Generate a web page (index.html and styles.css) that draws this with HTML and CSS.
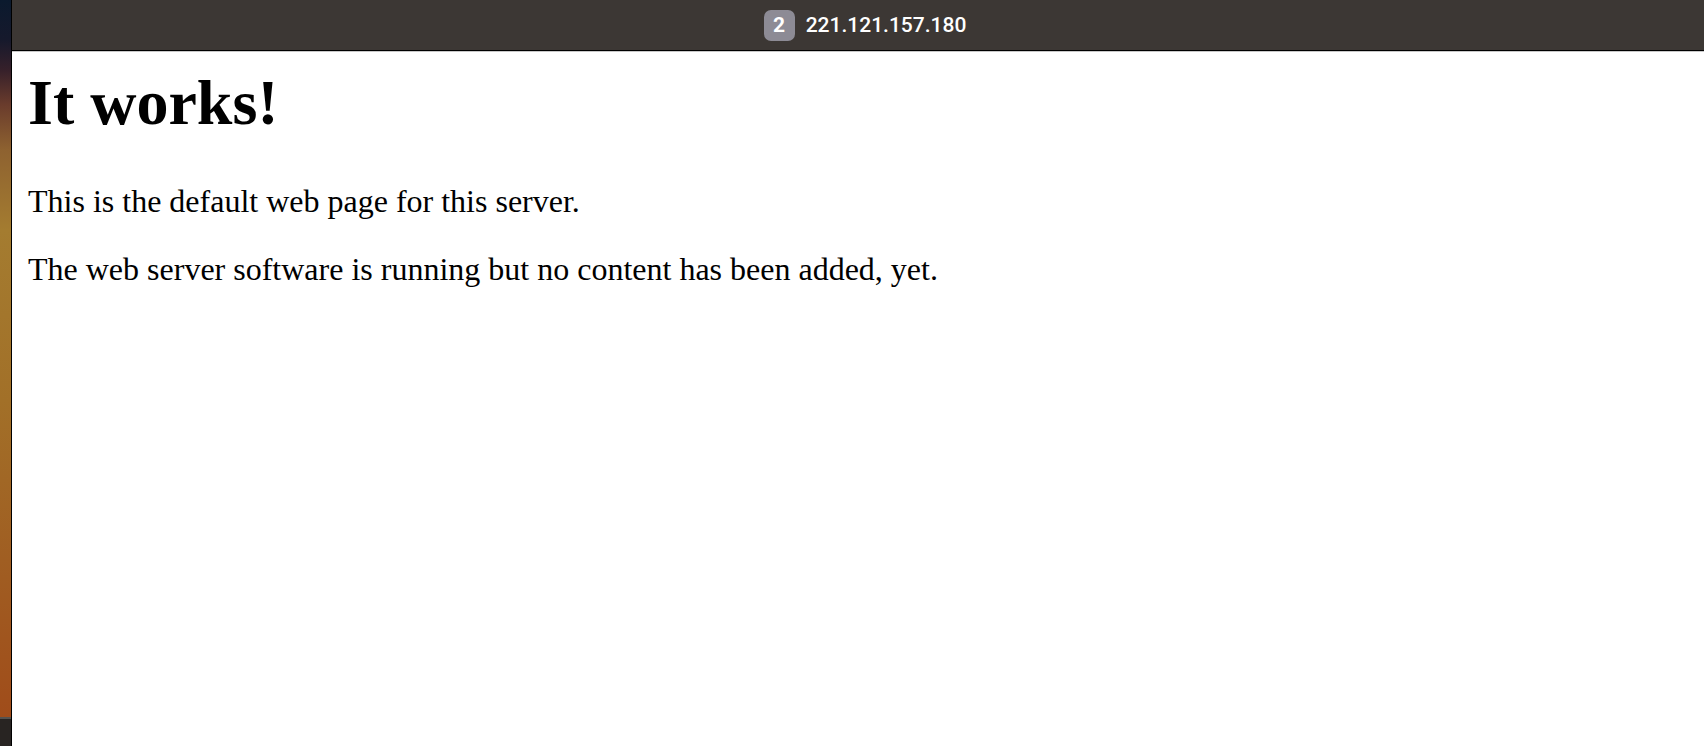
FILE: index.html
```html
<!DOCTYPE html>
<html>
<head>
<meta charset="utf-8">
<title>221.121.157.180</title>
<link rel="stylesheet" href="styles.css">
</head>
<body>
<div class="screen">
  <div class="desk">
    <div class="wallpaper"></div>
    <div class="dock"></div>
  </div>
  <div class="window">
    <div class="titlebar">
      <span class="badge">2</span>
      <span class="host">221.121.157.180</span>
    </div>
    <div class="page">
      <h1>It works!</h1>
      <p>This is the default web page for this server.</p>
      <p>The web server software is running but no content has been added, yet.</p>
    </div>
  </div>
</div>
</body>
</html>
```
FILE: styles.css
```css
html, body {
  margin: 0;
  padding: 0;
  height: 100%;
  overflow: hidden;
}
.screen {
  display: flex;
  height: 746px;
  width: 1704px;
}
.desk {
  width: 11px;
  display: flex;
  flex-direction: column;
  border-right: 1px solid #000;
}
.wallpaper {
  flex: 1;
  background: linear-gradient(to bottom, #0b1a2e 0px, #16192c 40px, #36202a 70px, #6a3c2c 105px, #8e6230 150px, #a47c30 230px, #a27028 400px, #a05e22 560px, #a04c1a 718px);
}
.dock {
  height: 27px;
  border-top: 2px solid #55524f;
  background: #282422;
}
.window {
  flex: 1;
  display: flex;
  flex-direction: column;
  background: #fff;
}
.titlebar {
  height: 50px;
  background: #3c3734;
  border-bottom: 1px solid #000;
  box-shadow: 0 1px 0 #c8c8c8;
  display: flex;
  align-items: center;
  justify-content: center;
  gap: 11px;
  padding-left: 14px;
}
.badge {
  width: 31px;
  height: 31px;
  border-radius: 7px;
  background: #8d8b95;
  color: #fff;
  font-family: "Roboto", "Liberation Sans", sans-serif;
  font-weight: 700;
  font-size: 21px;
  display: flex;
  align-items: center;
  justify-content: center;
}
.host {
  color: #fff;
  font-family: "Roboto", "Liberation Sans", sans-serif;
  font-weight: 500;
  font-size: 21px;
}
.page {
  padding: 15px 16px 0 16px;
  font-family: "Liberation Serif", "Times New Roman", serif;
  color: #000;
}
.page h1 {
  font-size: 64px;
  font-weight: bold;
  margin: 0 0 43px 0;
  line-height: 1.15;
}
.page p {
  font-size: 32px;
  margin: 0 0 32px 0;
  line-height: 1.15;
}
```
